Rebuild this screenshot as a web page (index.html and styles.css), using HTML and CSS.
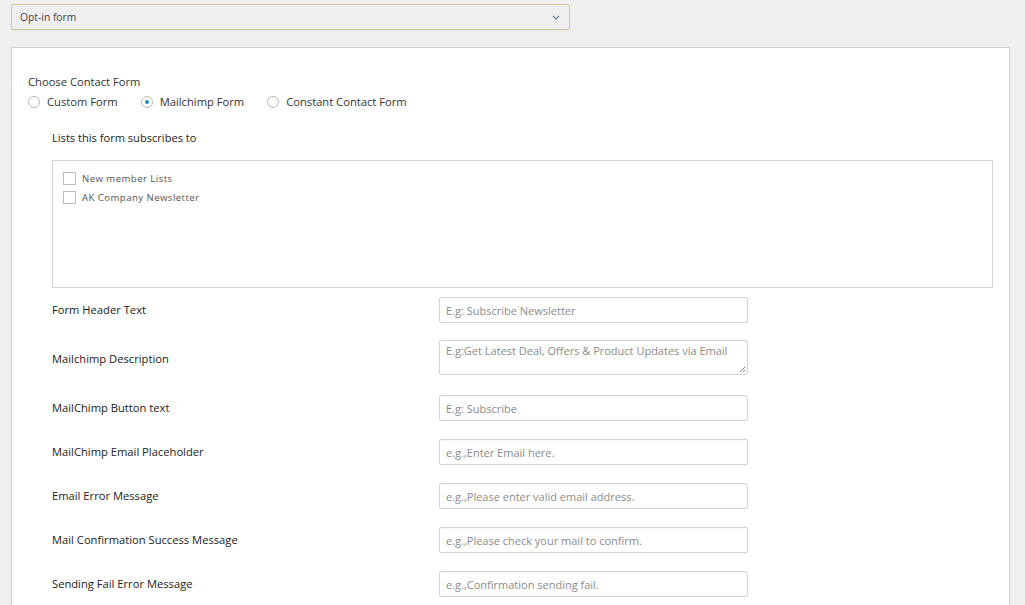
FILE: index.html
```html
<!DOCTYPE html>
<html>
<head>
<meta charset="utf-8">
<link rel="stylesheet" href="styles.css">
</head>
<body>
<div class="page">
  <div class="select">
    <span>Opt-in form</span>
    <svg class="chev" width="8" height="5" viewBox="0 0 8 5"><path d="M1 1 L4 4 L7 1" fill="none" stroke="#6a7a8a" stroke-width="1.1"/></svg>
  </div>
  <div class="panel">
    <div class="choose">Choose Contact Form</div>
    <div class="radios">
      <label class="radio"><span class="rb"></span>Custom Form</label>
      <label class="radio"><span class="rb on"></span>Mailchimp Form</label>
      <label class="radio"><span class="rb"></span>Constant Contact Form</label>
    </div>
    <div class="inner">
      <div class="lists-title">Lists this form subscribes to</div>
      <div class="lists">
        <div class="cb-row"><span class="cb"></span>New member Lists</div>
        <div class="cb-row"><span class="cb"></span>AK Company Newsletter</div>
      </div>
      <div class="rows">
        <div class="lbl">Form Header Text</div>
        <div class="inp">E.g: Subscribe Newsletter</div>
        <div class="lbl">Mailchimp Description</div>
        <div class="inp ta">E.g:Get Latest Deal, Offers &amp; Product Updates via Email
          <svg class="grip" width="8" height="8" viewBox="0 0 8 8"><path d="M7 2 L2 7 M7 5 L5 7" stroke="#777" stroke-width="0.9"/></svg>
        </div>
        <div class="lbl">MailChimp Button text</div>
        <div class="inp">E.g: Subscribe</div>
        <div class="lbl">MailChimp Email Placeholder</div>
        <div class="inp">e.g.,Enter Email here.</div>
        <div class="lbl">Email Error Message</div>
        <div class="inp">e.g.,Please enter valid email address.</div>
        <div class="lbl">Mail Confirmation Success Message</div>
        <div class="inp">e.g.,Please check your mail to confirm.</div>
        <div class="lbl">Sending Fail Error Message</div>
        <div class="inp">e.g.,Confirmation sending fail.</div>
      </div>
    </div>
  </div>
</div>
</body>
</html>
```

FILE: styles.css
```css
html, body {
  margin: 0;
  padding: 0;
  background: #f0f0f0;
  font-family: "Open Sans", "Noto Sans", sans-serif;
  color: #333;
  overflow: hidden;
  height: 605px;
}
.page {
  padding: 4px 15px 0 11px;
}
.select {
  width: 559px;
  height: 26px;
  box-sizing: border-box;
  border: 1px solid #d7c79c;
  border-radius: 2px;
  background: #efefef;
  display: flex;
  align-items: center;
  justify-content: space-between;
  padding: 0 9px 0 8px;
  font-size: 10.3px;
  color: #444;
  box-shadow: 0 1px 1px rgba(0,0,0,0.05);
}
.chev { margin-top: 1px; }
.panel {
  margin-top: 17px;
  background: #fff;
  border: 1px solid #cfcfcf;
  border-bottom: none;
  padding: 26px 16px 0 16px;
  height: 570px;
  box-sizing: border-box;
}
.choose {
  font-size: 11.2px;
  line-height: 16px;
  color: #333;
}
.radios {
  display: flex;
  margin-top: 4px;
  font-size: 11.2px;
  line-height: 16px;
  color: #333;
}
.radio {
  display: flex;
  align-items: center;
  margin-right: 23px;
}
.rb {
  width: 10px;
  height: 10px;
  border: 1px solid #b8b8b8;
  border-radius: 50%;
  margin-right: 7px;
  box-sizing: content-box;
  display: inline-block;
  position: relative;
  background: #fff;
}
.rb.on::after {
  content: "";
  position: absolute;
  left: 3px;
  top: 3px;
  width: 4px;
  height: 4px;
  border-radius: 50%;
  background: #1e8cbe;
}
.inner {
  padding-left: 24px;
}
.lists-title {
  margin-top: 20px;
  font-size: 11.1px;
  line-height: 16px;
  color: #222;
}
.lists {
  margin-top: 14px;
  height: 128px;
  box-sizing: border-box;
  border: 1px solid #d6d6d6;
  padding: 9px 10px;
  font-size: 9.6px;
  letter-spacing: 0.45px;
  color: #555;
}
.cb-row {
  display: flex;
  align-items: center;
  height: 17px;
  margin-bottom: 2px;
}
.cb {
  width: 11px;
  height: 11px;
  border: 1px solid #bbb;
  margin-right: 6px;
  background: #fff;
}
.rows {
  margin-top: 9px;
  display: grid;
  grid-template-columns: 387px 309px;
  row-gap: 18px;
  align-items: center;
}
.lbl {
  font-size: 11.2px;
  color: #222;
  padding-bottom: 2px;
}
.inp {
  height: 26px;
  box-sizing: border-box;
  border: 1px solid #d4d4d4;
  border-radius: 2px;
  font-size: 11px;
  color: #8c8c8c;
  padding: 0 6px;
  display: flex;
  align-items: center;
  white-space: nowrap;
  box-shadow: inset 0 1px 1px rgba(0,0,0,0.03);
}
.inp.ta {
  height: 35px;
  margin-top: -1px;
  margin-bottom: 2px;
  align-items: flex-start;
  padding-top: 2px;
  position: relative;
}
.grip {
  position: absolute;
  right: 1px;
  bottom: 1px;
}
```
